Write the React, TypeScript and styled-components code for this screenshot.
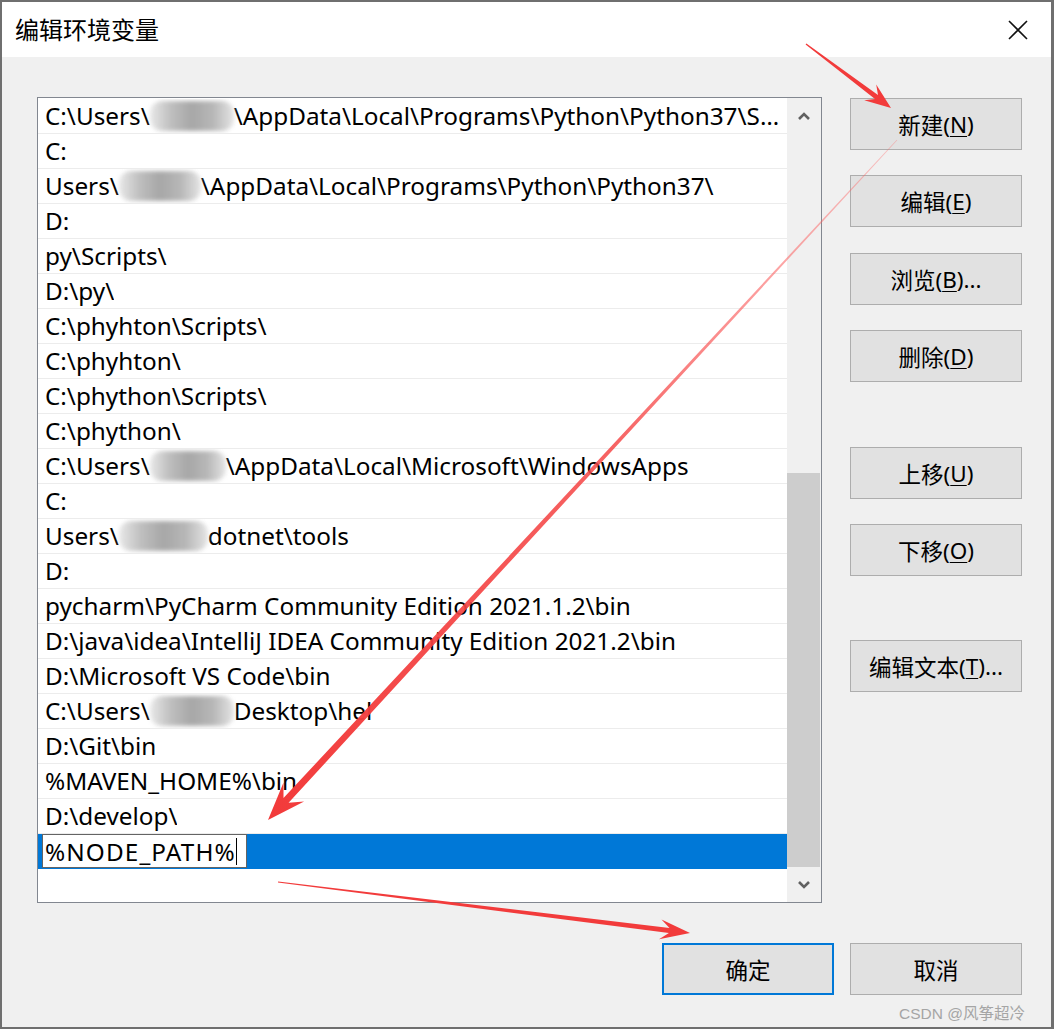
import React from "react";
import styled, { createGlobalStyle } from "styled-components";

const GlobalStyle = createGlobalStyle`
  html, body { margin: 0; padding: 0; background: #ffffff; }
  body { font-family: "Noto Sans", "Noto Sans CJK SC", sans-serif; }
  * { box-sizing: border-box; }
`;

const Page = styled.div`
  position: relative;
  width: 1054px;
  height: 1029px;
`;

const Window = styled.div`
  width: 1054px;
  height: 1029px;
  border: 2px solid #6f6f6f;
  border-right-width: 3px;
  display: flex;
  flex-direction: column;
  background: #f0f0f0;
`;

const TitleBar = styled.div`
  height: 55px;
  flex: none;
  background: #ffffff;
  display: flex;
  align-items: center;
  justify-content: space-between;
  padding-left: 13px;
`;

const Title = styled.div`
  font-family: "Noto Sans CJK SC", sans-serif;
  font-size: 24px;
  color: #000;
  line-height: 1;
  padding-bottom: 2px;
`;

const CloseBox = styled.div`
  width: 66px;
  height: 55px;
  display: flex;
  align-items: center;
  justify-content: center;
`;

const Body = styled.div`
  flex: 1;
  display: grid;
  grid-template-columns: 785px 172px;
  grid-template-rows: 806px auto;
  column-gap: 28px;
  row-gap: 40px;
  padding: 40px 29px 0 35px;
`;

const ListBox = styled.div`
  border: 1px solid #828790;
  background: #ffffff;
  display: flex;
  overflow: hidden;
`;

const Rows = styled.div`
  flex: 1;
  min-width: 0;
  padding-top: 1px;
  display: flex;
  flex-direction: column;
`;

const Row = styled.div<{ $selected?: boolean }>`
  height: 35px;
  flex: none;
  display: flex;
  align-items: center;
  padding-left: 7px;
  padding-right: 1px;
  border-bottom: 1px solid ${(p) => (p.$selected ? "#0078d7" : "#ececec")};
  background: ${(p) => (p.$selected ? "#0078d7" : "#ffffff")};
  font-family: "Noto Sans", "Noto Sans CJK SC", sans-serif;
  font-size: 24.3px;
  color: #000;
  white-space: nowrap;
  overflow: hidden;
`;

const RowText = styled.span`
  overflow: hidden;
  text-overflow: ellipsis;
  white-space: nowrap;
  display: block;
  line-height: 34px;
  min-width: 0;
`;

const Blur = styled.span<{ $w: number }>`
  display: inline-block;
  width: ${(p) => p.$w}px;
  height: 30px;
  vertical-align: middle;
  margin-top: -4px;
  border-radius: 12px;
  background: linear-gradient(
    90deg,
    #e6e6e6 0%,
    #b8b8b8 25%,
    #9e9e9e 50%,
    #b0b0b0 75%,
    #e2e2e2 100%
  );
  filter: blur(2px);
  opacity: 0.9;
`;

const EditBox = styled.div`
  width: 205px;
  height: 34px;
  margin-left: -3px;
  background: #ffffff;
  border: 1px solid #646464;
  display: flex;
  align-items: center;
  padding-left: 2px;
  font-family: "Noto Sans", sans-serif;
  font-size: 24.3px;
  letter-spacing: 1.1px;
  color: #000;
`;

const Caret = styled.span`
  display: inline-block;
  width: 1px;
  height: 27px;
  background: #000;
  margin-left: 0px;
`;

const ScrollBar = styled.div`
  width: 34px;
  flex: none;
  background: #f0f0f0;
  display: flex;
  flex-direction: column;
`;

const ArrowBtn = styled.div`
  height: 35px;
  flex: none;
  display: flex;
  align-items: center;
  justify-content: center;
`;

const Track = styled.div`
  flex: 1;
  display: flex;
  flex-direction: column;
  justify-content: flex-end;
  padding: 0 1px 0 0;
`;

const Thumb = styled.div`
  height: 394px;
  background: #cdcdcd;
`;

const ButtonColumn = styled.div`
  display: flex;
  flex-direction: column;
  padding-top: 1px;
`;

const Button = styled.div<{ $gapBefore?: number; $primary?: boolean }>`
  height: 52px;
  width: 172px;
  flex: none;
  margin-top: ${(p) => p.$gapBefore ?? 0}px;
  background: #e1e1e1;
  border: ${(p) => (p.$primary ? "2px solid #0078d7" : "1px solid #adadad")};
  display: flex;
  align-items: center;
  justify-content: center;
  font-family: "Noto Sans", "Noto Sans CJK SC", sans-serif;
  font-size: 22.5px;
  color: #000;
  u {
    text-decoration-thickness: 1px;
    text-underline-offset: 3px;
  }
`;

const Footer = styled.div`
  grid-column: 1 / span 2;
  display: flex;
  justify-content: flex-end;
  gap: 16px;
`;

const Overlay = styled.svg`
  position: absolute;
  left: 0;
  top: 0;
  width: 1054px;
  height: 1029px;
  pointer-events: none;
`;

const Watermark = styled.div`
  position: absolute;
  right: 29px;
  top: 1001px;
  font-family: "Liberation Sans", "Noto Sans CJK SC", sans-serif;
  font-size: 15.5px;
  color: #a5a5a5;
`;

type Seg = string | { blur: number };

const rows: Seg[][] = [
  ["C:\\Users\\", { blur: 84 }, "\\AppData\\Local\\Programs\\Python\\Python37\\Scripts\\"],
  ["C:"],
  ["Users\\", { blur: 82 }, "\\AppData\\Local\\Programs\\Python\\Python37\\"],
  ["D:"],
  ["py\\Scripts\\"],
  ["D:\\py\\"],
  ["C:\\phyhton\\Scripts\\"],
  ["C:\\phyhton\\"],
  ["C:\\phython\\Scripts\\"],
  ["C:\\phython\\"],
  ["C:\\Users\\", { blur: 76 }, "\\AppData\\Local\\Microsoft\\WindowsApps"],
  ["C:"],
  ["Users\\", { blur: 89 }, "dotnet\\tools"],
  ["D:"],
  ["pycharm\\PyCharm Community Edition 2021.1.2\\bin"],
  ["D:\\java\\idea\\IntelliJ IDEA Community Edition 2021.2\\bin"],
  ["D:\\Microsoft VS Code\\bin"],
  ["C:\\Users\\", { blur: 84 }, "Desktop\\hel"],
  ["D:\\Git\\bin"],
  ["%MAVEN_HOME%\\bin"],
  ["D:\\develop\\"],
];

function Chevron({ up }: { up?: boolean }) {
  return (
    <svg width="14" height="10" viewBox="0 0 14 10">
      <polyline
        points={up ? "2,8 7,3 12,8" : "2,2 7,7 12,2"}
        fill="none"
        stroke="#606060"
        strokeWidth="2.6"
      />
    </svg>
  );
}

function arrowPoints(
  x1: number,
  y1: number,
  x2: number,
  y2: number,
  w1: number,
  w2: number,
  headLen: number,
  headW: number
) {
  const dx = x2 - x1;
  const dy = y2 - y1;
  const len = Math.hypot(dx, dy);
  const ux = dx / len;
  const uy = dy / len;
  const nx = -uy;
  const ny = ux;
  const bx = x2 - ux * headLen;
  const by = y2 - uy * headLen;
  const sx = x2 - ux * headLen * 0.7;
  const sy = y2 - uy * headLen * 0.7;
  const pts: [number, number][] = [
    [x1 + (nx * w1) / 2, y1 + (ny * w1) / 2],
    [sx + (nx * w2) / 2, sy + (ny * w2) / 2],
    [bx + (nx * headW) / 2, by + (ny * headW) / 2],
    [x2, y2],
    [bx - (nx * headW) / 2, by - (ny * headW) / 2],
    [sx - (nx * w2) / 2, sy - (ny * w2) / 2],
    [x1 - (nx * w1) / 2, y1 - (ny * w1) / 2],
  ];
  return pts.map((p) => `${p[0].toFixed(1)},${p[1].toFixed(1)}`).join(" ");
}

export default function App() {
  return (
    <Page>
      <GlobalStyle />
      <Window>
        <TitleBar>
          <Title>编辑环境变量</Title>
          <CloseBox>
            <svg width="22" height="22" viewBox="0 0 22 22">
              <path d="M2 2 L20 20 M20 2 L2 20" stroke="#111" strokeWidth="1.6" fill="none" />
            </svg>
          </CloseBox>
        </TitleBar>
        <Body>
          <ListBox>
            <Rows>
              {rows.map((segs, i) => (
                <Row key={i}>
                  <RowText>
                    {segs.map((s, j) =>
                      typeof s === "string" ? (
                        <React.Fragment key={j}>{s}</React.Fragment>
                      ) : (
                        <Blur key={j} $w={s.blur} />
                      )
                    )}
                  </RowText>
                </Row>
              ))}
              <Row $selected>
                <EditBox>
                  %NODE_PATH%
                  <Caret />
                </EditBox>
              </Row>
            </Rows>
            <ScrollBar>
              <ArrowBtn>
                <Chevron up />
              </ArrowBtn>
              <Track>
                <Thumb />
              </Track>
              <ArrowBtn>
                <Chevron />
              </ArrowBtn>
            </ScrollBar>
          </ListBox>
          <ButtonColumn>
            <Button>
              新建(<u>N</u>)
            </Button>
            <Button $gapBefore={25}>
              编辑(<u>E</u>)
            </Button>
            <Button $gapBefore={26}>
              浏览(<u>B</u>)...
            </Button>
            <Button $gapBefore={25}>
              删除(<u>D</u>)
            </Button>
            <Button $gapBefore={65}>
              上移(<u>U</u>)
            </Button>
            <Button $gapBefore={25}>
              下移(<u>O</u>)
            </Button>
            <Button $gapBefore={64}>
              编辑文本(<u>T</u>)...
            </Button>
          </ButtonColumn>
          <Footer>
            <Button $primary>确定</Button>
            <Button>取消</Button>
          </Footer>
        </Body>
      </Window>
      <Overlay viewBox="0 0 1054 1029">
        <defs>
          <linearGradient id="g2" gradientUnits="userSpaceOnUse" x1="897" y1="140" x2="268" y2="820">
            <stop offset="0" stopColor="#ff6a6a" stopOpacity="0.35" />
            <stop offset="0.45" stopColor="#f54848" stopOpacity="0.85" />
            <stop offset="1" stopColor="#f23a3a" stopOpacity="1" />
          </linearGradient>
        </defs>
        <polygon points={arrowPoints(806, 44, 891, 108, 1.2, 5, 26, 20)} fill="#f23b3b" />
        <polygon points={arrowPoints(897, 140, 268, 820, 0.8, 7, 38, 28)} fill="url(#g2)" />
        <polygon points={arrowPoints(278, 882, 690, 933, 1, 5, 30, 20)} fill="#f23b3b" />
      </Overlay>
      <Watermark>CSDN @风筝超冷</Watermark>
    </Page>
  );
}
